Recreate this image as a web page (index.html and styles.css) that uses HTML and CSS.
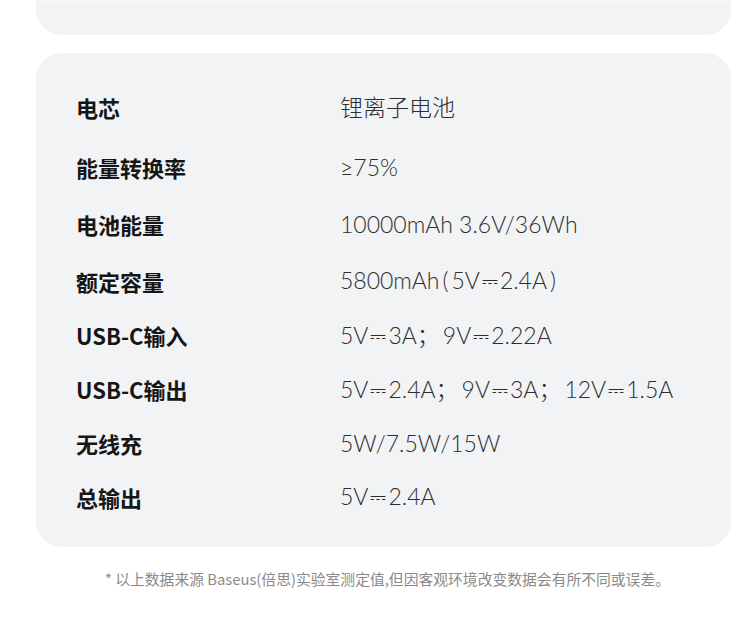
FILE: index.html
```html
<!DOCTYPE html>
<html lang="zh-CN">
<head>
<meta charset="utf-8">
<title>参数</title>
<link rel="stylesheet" href="styles.css">
</head>
<body>
<div class="page">
  <div class="card card--top"></div>
  <div class="card card--specs">
    <div class="spec-row gap-xl"><div class="spec-label">电芯</div><div class="spec-value">锂离子电池</div></div>
    <div class="spec-row gap-l"><div class="spec-label">能量转换率</div><div class="spec-value">≥75%</div></div>
    <div class="spec-row gap-l"><div class="spec-label">电池能量</div><div class="spec-value">10000mAh 3.6V/36Wh</div></div>
    <div class="spec-row"><div class="spec-label">额定容量</div><div class="spec-value">5800mAh<span class="paren">(</span>5V<span class="dc">⎓</span>2.4A<span class="paren">)</span></div></div>
    <div class="spec-row"><div class="spec-label">USB-C输入</div><div class="spec-value">5V<span class="dc">⎓</span>3A<span class="semi">；</span>9V<span class="dc">⎓</span>2.22A</div></div>
    <div class="spec-row"><div class="spec-label">USB-C输出</div><div class="spec-value">5V<span class="dc">⎓</span>2.4A<span class="semi">；</span>9V<span class="dc">⎓</span>3A<span class="semi">；</span>12V<span class="dc">⎓</span>1.5A</div></div>
    <div class="spec-row"><div class="spec-label">无线充</div><div class="spec-value">5W/7.5W/15W</div></div>
    <div class="spec-row last"><div class="spec-label">总输出</div><div class="spec-value">5V<span class="dc">⎓</span>2.4A</div></div>
  </div>
  <p class="footnote">* 以上数据来源 Baseus(倍思)实验室测定值,但因客观环境改变数据会有所不同或误差。</p>
</div>
</body>
</html>
```

FILE: styles.css
```css
html, body {
  margin: 0;
  padding: 0;
  background: #ffffff;
}

.page {
  width: 695px;
  padding-left: 36px;
  font-family: "Lato", "Noto Sans CJK SC", sans-serif;
}

.card {
  background: #f2f3f5;
  border-radius: 26px;
}

.card--top {
  height: 35px;
  border-radius: 0 0 26px 26px;
  border-top: 1px solid #f8f9fa;
  box-sizing: border-box;
}

.card--specs {
  margin-top: 18px;
  padding: 39px 0 35px 40px;
  display: flex;
  flex-direction: column;
}

.spec-row {
  display: flex;
  align-items: center;
  height: 30px;
  margin-bottom: 24px;
}

.spec-row.gap-xl { margin-bottom: 30px; }
.spec-row.gap-l { margin-bottom: 27px; }
.spec-row.last { margin-bottom: 0; }

.spec-label {
  width: 264px;
  font-family: "Noto Sans CJK SC", sans-serif;
  font-weight: 700;
  font-size: 22px;
  color: #161616;
  line-height: 30px;
}

.spec-value {
  font-size: 23px;
  font-weight: 300;
  color: #2e2e2e;
  line-height: 30px;
  white-space: nowrap;
}

.dc {
  font-family: "DejaVu Sans", sans-serif;
  font-size: 20px;
  margin: 0 2px;
  position: relative;
  top: -1px;
}

.semi {
  font-family: "Noto Sans CJK SC", sans-serif;
  margin-right: 3px;
}

.paren {
  margin: 0 3px;
}

.footnote {
  margin: 22px 0 0;
  padding-left: 8px;
  text-align: center;
  font-family: "Noto Sans CJK SC", sans-serif;
  font-size: 14.8px;
  line-height: 20px;
  color: #8a8a8a;
}
```
